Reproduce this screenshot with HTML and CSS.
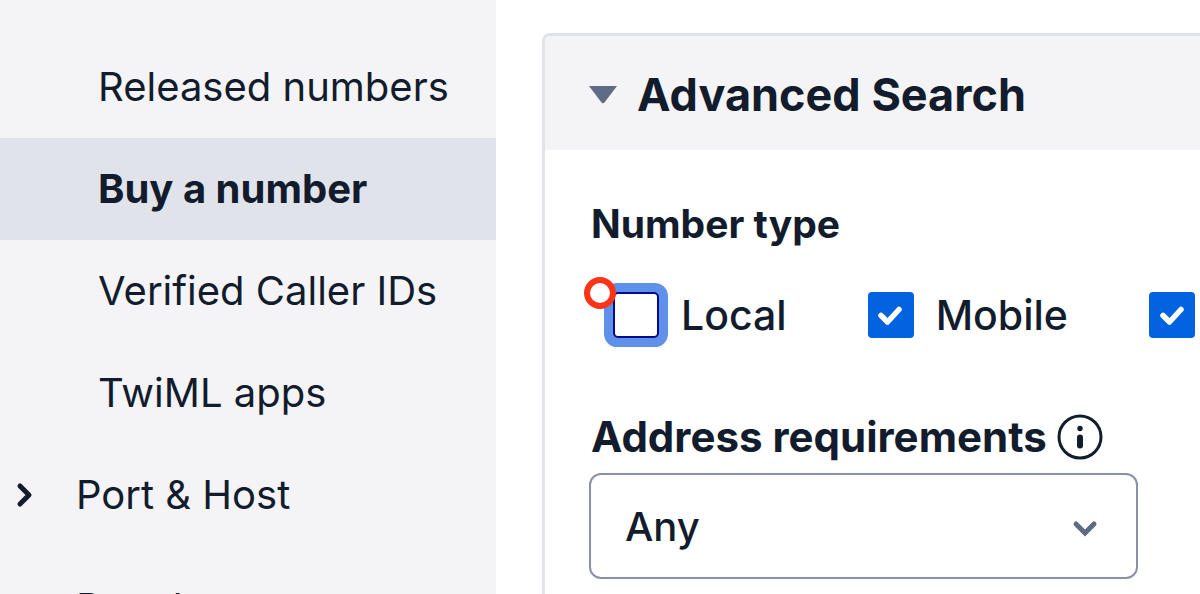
FILE: index.html
```html
<!DOCTYPE html>
<html lang="en">
<head>
<meta charset="utf-8">
<title>Buy a number</title>
<link rel="stylesheet" href="styles.css">
</head>
<body>
<div class="layout">
  <nav class="sidebar" aria-label="Phone numbers">
    <a class="nav-item nav-child" href="#active">Active numbers</a>
    <a class="nav-item nav-child" href="#released">Released numbers</a>
    <a class="nav-item nav-child is-active" href="#buy" aria-current="page">Buy a number</a>
    <a class="nav-item nav-child" href="#verified">Verified Caller IDs</a>
    <a class="nav-item nav-child" href="#twiml">TwiML apps</a>
    <a class="nav-item nav-group" href="#port">
      <svg class="nav-chevron" viewBox="0 0 20 28" aria-hidden="true"><path d="M6 5l9 9-9 9" fill="none" stroke="currentColor" stroke-width="5" stroke-linecap="round" stroke-linejoin="round"/></svg>
      Port &amp; Host
    </a>
    <a class="nav-item nav-section" href="#regulatory">Regulatory</a>
  </nav>
  <main class="content">
    <section class="panel">
      <button class="panel-header" type="button" aria-expanded="true">
        <svg class="caret" viewBox="0 0 28 18" aria-hidden="true"><path d="M0 0h28L15.500 16.500q-1.500 1.500-3 0z" fill="currentColor"/></svg>
        <span>Advanced Search</span>
      </button>
      <div class="panel-body">
        <fieldset class="types">
          <legend class="field-title">Number type</legend>
          <div class="type-row">
            <div class="option">
              <span class="box is-focused"><input class="check" type="checkbox" id="local"><span class="marker" aria-hidden="true"></span></span>
              <label for="local">Local</label>
            </div>
            <div class="option">
              <span class="box"><input class="check" type="checkbox" id="mobile" checked><svg class="tick" viewBox="0 0 46 46" aria-hidden="true"><path d="M13 23.500l6.500 6.500 11.500-12.500" fill="none" stroke="#fff" stroke-width="5.500" stroke-linecap="round" stroke-linejoin="round"/></svg></span>
              <label for="mobile">Mobile</label>
            </div>
            <div class="option">
              <span class="box"><input class="check" type="checkbox" id="other" aria-label="Additional number type" checked><svg class="tick" viewBox="0 0 46 46" aria-hidden="true"><path d="M14 23.500l6.500 6.500 11.500-12.500" fill="none" stroke="#fff" stroke-width="5.500" stroke-linecap="round" stroke-linejoin="round"/></svg></span>
            </div>
          </div>
        </fieldset>
        <div class="address">
          <div class="address-title">
            <label class="field-title field-title-wide" for="address">Address requirements</label>
            <button class="info" type="button" aria-label="About address requirements">
              <svg viewBox="0 0 46 46" aria-hidden="true"><circle cx="23" cy="23" r="21" fill="none" stroke="currentColor" stroke-width="3"/><circle cx="23" cy="14.500" r="2.700" fill="currentColor"/><path d="M23 23.500v8" stroke="currentColor" stroke-width="6" stroke-linecap="round"/></svg>
            </button>
          </div>
          <div class="select-wrap">
            <select class="select" id="address"><option>Any</option></select>
            <svg class="select-chevron" viewBox="0 0 26 18" aria-hidden="true"><path d="M4 5l9 9 9-9" fill="none" stroke="currentColor" stroke-width="5" stroke-linecap="round"/></svg>
          </div>
        </div>
      </div>
    </section>
  </main>
</div>
</body>
</html>
```
FILE: styles.css
```css
* { box-sizing: border-box; }
body {
  margin: 0;
  background: #fff;
  color: #121c2d;
  font: 400 40px/48px Inter, "Liberation Sans", sans-serif;
  overflow: hidden;
}
button, select, input { font: inherit; color: inherit; margin: 0; }
.layout { display: flex; height: 100vh; }
.sidebar {
  flex: 0 0 496px;
  background: #f4f4f6;
  overflow: hidden;
}
.nav-item {
  display: flex;
  align-items: center;
  height: 102px;
  color: inherit;
  text-decoration: none;
}
.nav-item:first-child { margin-top: -66px; }
.nav-child { padding-left: 98px; }
.is-active { background: #e1e3ea; font-weight: 700; }
.nav-group { padding-left: 14px; gap: 42px; }
.nav-section { margin-top: 11px; padding-left: 76px; }
.nav-chevron { width: 20px; height: 28px; }
.content { flex: 1; min-width: 0; padding: 33px 0 0 46px; overflow: hidden; }
.panel {
  min-height: 100%;
  border: 3px solid #e1e3ea;
  border-right: 0;
  border-bottom: 0;
  border-radius: 8px 0 0 0;
}
.panel-header {
  display: flex;
  align-items: center;
  gap: 20px;
  width: 100%;
  height: 114px;
  padding: 4px 0 0 44px;
  border: 0;
  border-radius: 5px 0 0 0;
  background: #f4f4f6;
  font-size: 45px;
  font-weight: 700;
  text-align: left;
}
.caret { width: 28px; height: 18px; color: #606b85; }
.panel-body { padding: 50px 0 0 44px; }
.types { margin: 0; padding: 0; border: 0; min-width: 0; }
.field-title { padding: 0 0 0 2px; font-size: 39px; font-weight: 700; }
.field-title-wide { font-size: 42px; }
.type-row { display: flex; gap: 81px; padding: 43px 0 0 24px; white-space: nowrap; }
.option { display: flex; align-items: center; gap: 22px; font-size: 41px; font-weight: 500; }
.box { position: relative; width: 46px; height: 46px; flex: none; }
.check {
  display: block;
  appearance: none;
  width: 46px;
  height: 46px;
  border: 2px solid #030b8c;
  border-radius: 5px;
  background: #fff;
}
.check:checked { border: 0; background: #0263e0; border-radius: 4px; }
.is-focused .check { box-shadow: 0 0 0 9px #5e92ea; }
.tick { position: absolute; inset: 0; pointer-events: none; }
.marker {
  position: absolute;
  top: -15px;
  left: -29px;
  width: 32px;
  height: 32px;
  border: 6px solid #ff3317;
  border-radius: 50%;
  background: #fff;
}
.address { padding-top: 74px; }
.address-title { display: flex; align-items: center; gap: 10px; }
.info { width: 46px; height: 46px; padding: 0; border: 0; background: none; }
.info svg { display: block; }
.select-wrap { position: relative; width: 549px; max-width: 100%; margin-top: 12px; }
.select {
  display: block;
  appearance: none;
  width: 100%;
  height: 106px;
  padding: 2px 80px 0 34px;
  border: 2px solid #8891aa;
  border-radius: 12px;
  background: #fff;
  font-weight: 500;
}
.select-chevron {
  position: absolute;
  right: 40px;
  top: 46px;
  width: 26px;
  height: 18px;
  color: #606b85;
  pointer-events: none;
}
```
